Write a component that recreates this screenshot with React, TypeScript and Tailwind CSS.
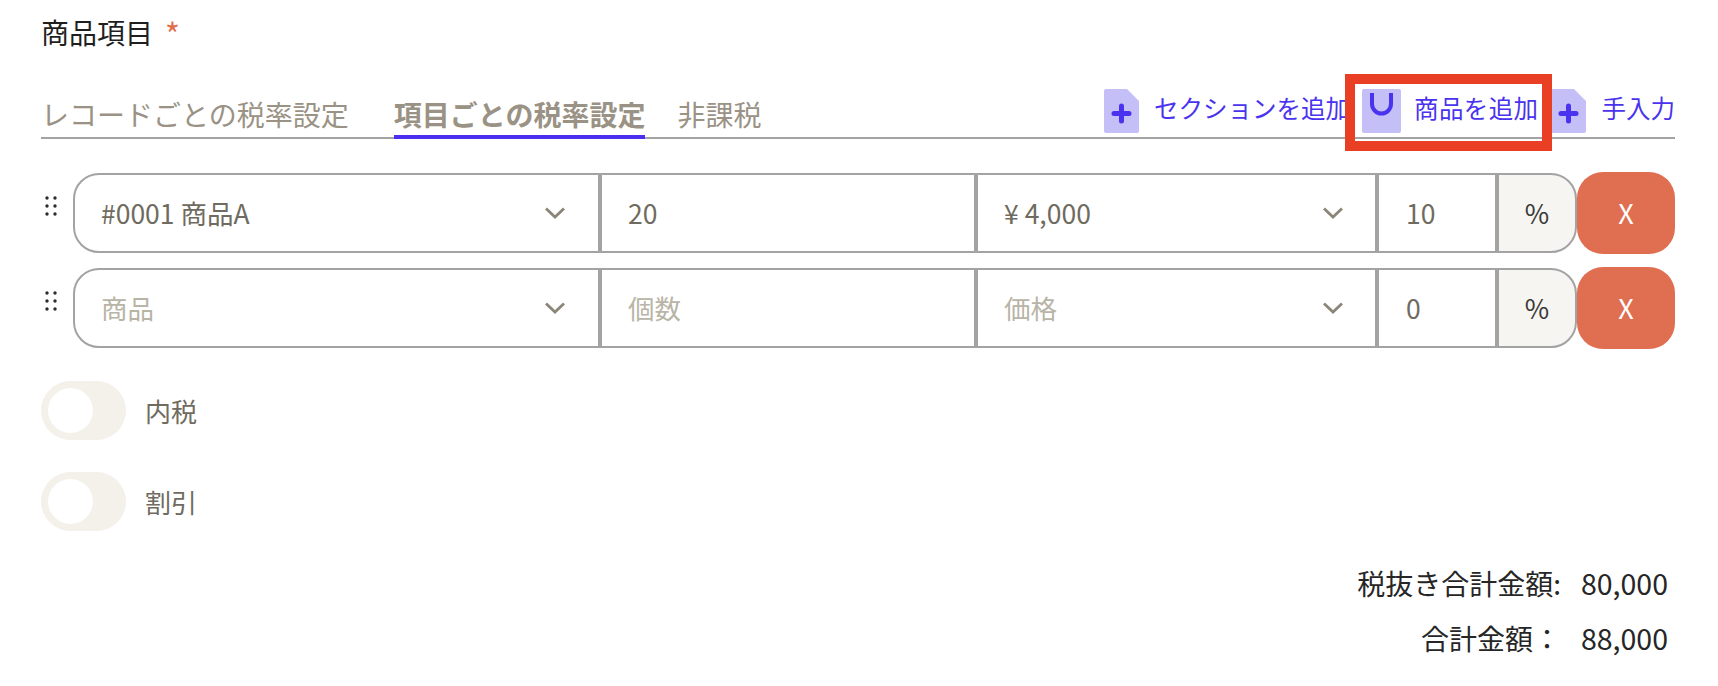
import React from 'react';

const FONT = '"Noto Sans CJK JP", "Noto Sans", sans-serif';

const Chevron = () => (
  <svg width="22" height="14" viewBox="0 0 22 14" fill="none" className="shrink-0">
    <path d="M2 2.5 L11 11 L20 2.5" stroke="#8b8678" strokeWidth="2.8" />
  </svg>
);

const DragHandle = () => (
  <svg width="12" height="20" viewBox="0 0 12 20" className="shrink-0">
    {[2, 10, 18].map((y) => (
      <g key={y} fill="#2b2b29">
        <circle cx="2" cy={y} r="1.7" />
        <circle cx="10" cy={y} r="1.7" />
      </g>
    ))}
  </svg>
);

const DocPlusIcon = () => (
  <svg width="35" height="44" viewBox="0 0 35 44" className="shrink-0">
    <path d="M2 0 H23 L35 12 V42 a2 2 0 0 1 -2 2 H2 a2 2 0 0 1 -2 -2 V2 a2 2 0 0 1 2 -2 Z" fill="#c5bff7" />
    <path d="M17.5 17 V32 M10 24.5 H25" stroke="#4a33ee" strokeWidth="5" strokeLinecap="round" />
  </svg>
);

const MagnetIcon = () => (
  <svg width="39" height="44" viewBox="0 0 39 44" className="shrink-0">
    <rect width="39" height="44" rx="2" fill="#c5bff7" />
    <path d="M10 4 V15 a9.5 9.5 0 0 0 19 0 V4" fill="none" stroke="#4a33ee" strokeWidth="4" />
  </svg>
);

interface RowProps {
  product: string;
  qty: string;
  price: string;
  tax: string;
  placeholder?: boolean;
}

const ItemRow: React.FC<RowProps> = ({ product, qty, price, tax, placeholder = false }) => {
  const valueColor = placeholder ? 'text-[#b8b4a6]' : 'text-[#6f6b60]';
  return (
    <div className="flex h-[82px] items-center">
      <div className="flex h-full w-[32px] shrink-0 items-start pl-[4px] pt-[24px]">
        <DragHandle />
      </div>
      <div className="flex h-[80px] w-[1504px] text-[26.5px]">
        <div className={`flex w-[527px] items-center justify-between rounded-l-[26px] border-2 border-[#a3a3a3] pl-[26px] pr-[32px] ${valueColor}`}>
          <span>{product}</span>
          <Chevron />
        </div>
        <div className={`flex w-[376px] items-center border-2 border-[#a3a3a3] pl-[26px] ${valueColor}`}>
          <span>{qty}</span>
        </div>
        <div className={`flex w-[401px] items-center justify-between border-2 border-[#a3a3a3] pl-[26px] pr-[31px] ${valueColor}`}>
          <span>{price}</span>
          <Chevron />
        </div>
        <div className="flex w-[120px] items-center border-2 border-[#a3a3a3] pl-[27px] text-[#6f6b60]">
          <span>{tax}</span>
        </div>
        <div className="flex w-[80px] items-center justify-center rounded-r-[26px] border-2 border-[#a3a3a3] bg-[#f6f5f1] text-[#3a3a38]">
          <span>%</span>
        </div>
      </div>
      <button className="flex h-[82px] w-[98px] items-center justify-center rounded-[26px] bg-[#e06f52] text-[27px] text-white">
        X
      </button>
    </div>
  );
};

const Toggle: React.FC<{ label: string }> = ({ label }) => (
  <div className="flex items-center">
    <div className="flex h-[59px] w-[85px] items-center rounded-full bg-[#f4f0ea] pl-[7px]">
      <div className="h-[45px] w-[45px] rounded-full bg-white" />
    </div>
    <span className="ml-[19px] text-[26px] text-[#6f6b60]">{label}</span>
  </div>
);

export default function App() {
  return (
    <div
      className="relative h-[686px] w-[1718px] overflow-hidden bg-white pl-[41px] pr-[43px]"
      style={{ fontFamily: FONT }}
      lang="ja"
    >
      <div className="mt-[12px] flex h-[40px] text-[28px] leading-[40px] text-[#1f1f1f]">
        商品項目
        <span className="ml-[12px] text-[32px] leading-[42px] text-[#e06f52]">*</span>
      </div>

      <div className="mt-[22px] flex h-[65px] items-end justify-between border-b-2 border-[#a3a3a3]">
        <div className="flex items-end text-[28px] leading-[40px] text-[#9a9284]">
          <div className="pb-[3px]">レコードごとの税率設定</div>
          <div className="relative ml-[45px] pb-[3px] font-bold">
            項目ごとの税率設定
            <div className="absolute -bottom-[2px] left-0 h-[4px] w-full bg-[#4a2ff0]" />
          </div>
          <div className="ml-[32px] pb-[3px]">非課税</div>
        </div>
        <div className="flex items-center pb-[4px] text-[24.5px] text-[#4a33ee]">
          <DocPlusIcon />
          <span className="ml-[15px] pb-[6px]">セクションを追加</span>
          <span className="ml-[12px]"><MagnetIcon /></span>
          <span className="ml-[13px] pb-[6px] tracking-[0.4px]">商品を追加</span>
          <span className="ml-[12px]"><DocPlusIcon /></span>
          <span className="ml-[16px] pb-[6px]">手入力</span>
        </div>
      </div>

      <div className="mt-[33px] flex flex-col gap-[13px]">
        <ItemRow product="#0001 商品A" qty="20" price="¥ 4,000" tax="10" />
        <ItemRow product="商品" qty="個数" price="価格" tax="0" placeholder />
      </div>

      <div className="mt-[32px] flex flex-col gap-[32px]">
        <Toggle label="内税" />
        <Toggle label="割引" />
      </div>

      <div className="mt-[32px] flex flex-col items-end gap-[15px] pr-[7px] text-[28px] leading-[40px] text-[#262626]">
        <div className="flex">
          <span>税抜き合計金額:</span>
          <span className="ml-[20px] text-[28.5px]">80,000</span>
        </div>
        <div className="flex">
          <span>合計金額：</span>
          <span className="ml-[20px] text-[28.5px]">88,000</span>
        </div>
      </div>

      {/* annotation box */}
      <div className="absolute left-[1345px] top-[74px] h-[77px] w-[207px] border-[10px] border-[#e94025]" />
    </div>
  );
}
